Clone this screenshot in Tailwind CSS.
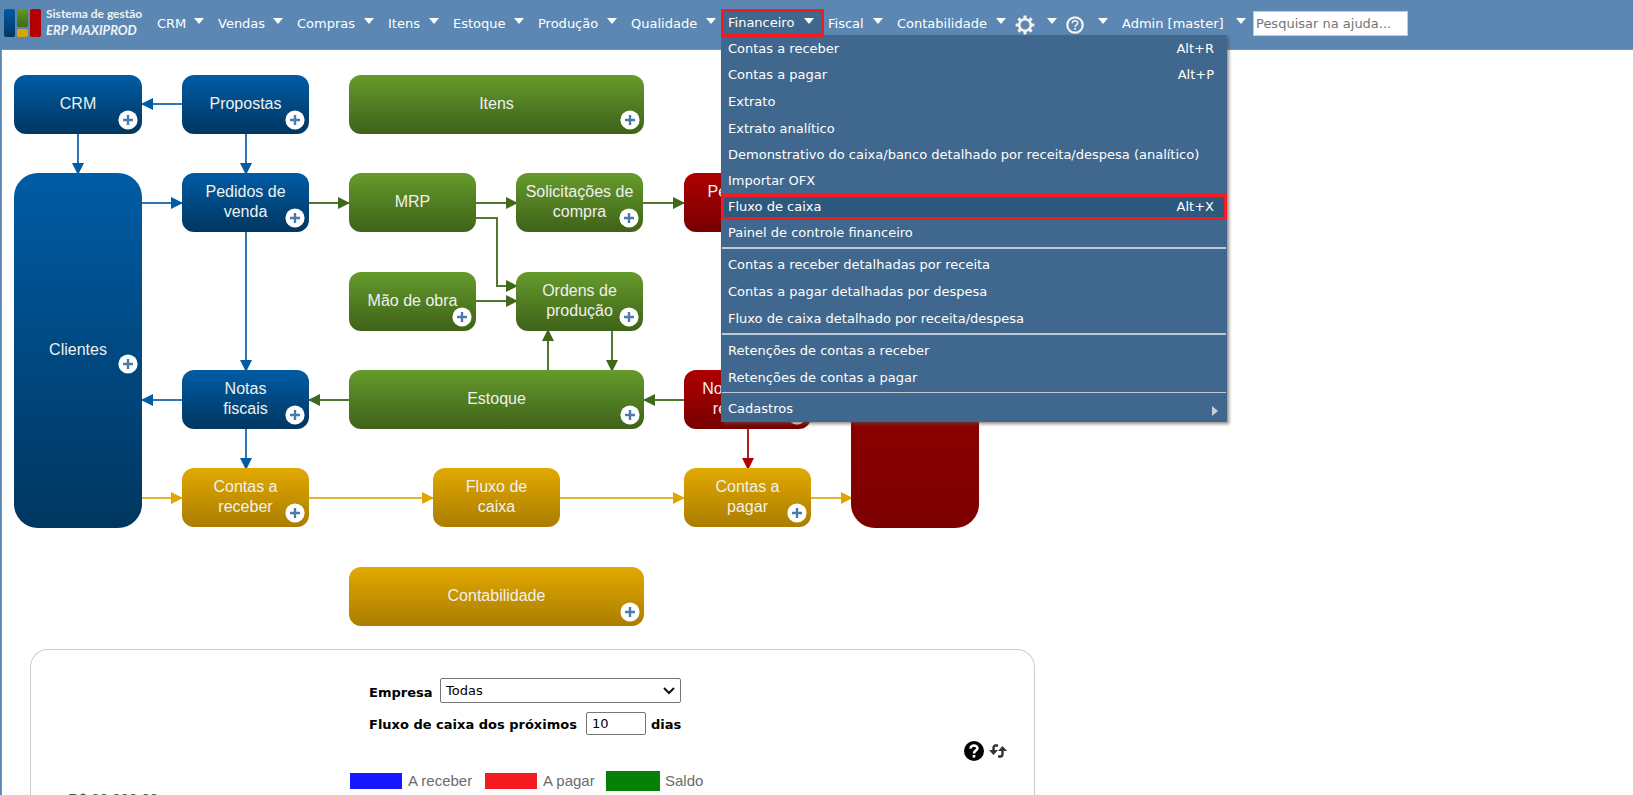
<!DOCTYPE html>
<html lang="pt-BR">
<head>
<meta charset="utf-8">
<title>ERP MAXIPROD</title>
<script src="https://cdn.jsdelivr.net/npm/@tailwindcss/browser@4"></script>
</head>
<body class="flex h-screen flex-col overflow-hidden bg-[#5c87b2] font-['Verdana','DejaVu_Sans',sans-serif] text-[13px] text-white">
<svg class="hidden" aria-hidden="true">
  <symbol id="tri" viewBox="0 0 10 6"><path d="M0 0h10L5 6z" fill="#fff"/></symbol>
  <symbol id="plus" viewBox="0 0 20 20"><circle cx="10" cy="10" r="9.6" fill="#fff"/><path d="M10 5v10M5 10h10" stroke="#4a7bab" stroke-width="2.4"/></symbol>
</svg>

<header class="flex h-[49px] shrink-0 items-start pl-1">
  <a href="#" class="mt-2 flex w-[153px] shrink-0 items-start gap-[5px] font-['Lato',sans-serif] text-[#eef3f8]">
    <svg class="mt-px h-7 w-[37px]" viewBox="0 0 37 28">
      <defs>
        <linearGradient id="lb" x2="0" y2="1"><stop stop-color="#005ca5"/><stop offset="1" stop-color="#003761"/></linearGradient>
        <linearGradient id="lg" x2="0" y2="1"><stop stop-color="#5f9a22"/><stop offset="1" stop-color="#3f6a14"/></linearGradient>
      </defs>
      <rect width="11" height="28" rx="2" fill="url(#lb)"/>
      <rect x="13" width="11" height="18" rx="2" fill="url(#lg)"/>
      <rect x="13" y="20" width="11" height="8" rx="2" fill="#dba400"/>
      <rect x="26" width="11" height="28" rx="2" fill="#b40000"/>
    </svg>
    <span class="block whitespace-nowrap text-xs leading-3 font-bold">Sistema de gestão<br><span class="block pt-0.5 text-[13px] leading-4 italic">ERP MAXIPROD</span></span>
  </a>
  <nav class="flex items-start whitespace-nowrap leading-[26px]">
    <a href="#" class="mt-[11px] flex w-[61px] items-start justify-between pr-3.5">CRM<svg class="mt-[7px] h-1.5 w-2.5"><use href="#tri"/></svg></a>
    <a href="#" class="mt-[11px] flex w-[79px] items-start justify-between pr-3.5">Vendas<svg class="mt-[7px] h-1.5 w-2.5"><use href="#tri"/></svg></a>
    <a href="#" class="mt-[11px] flex w-[91px] items-start justify-between pr-3.5">Compras<svg class="mt-[7px] h-1.5 w-2.5"><use href="#tri"/></svg></a>
    <a href="#" class="mt-[11px] flex w-[65px] items-start justify-between pr-3.5">Itens<svg class="mt-[7px] h-1.5 w-2.5"><use href="#tri"/></svg></a>
    <a href="#" class="mt-[11px] flex w-[85px] items-start justify-between pr-3.5">Estoque<svg class="mt-[7px] h-1.5 w-2.5"><use href="#tri"/></svg></a>
    <a href="#" class="mt-[11px] flex w-[93px] items-start justify-between pr-3.5">Produção<svg class="mt-[7px] h-1.5 w-2.5"><use href="#tri"/></svg></a>
    <a href="#" class="mt-[11px] flex w-[90px] items-start justify-between pr-[5px]">Qualidade<svg class="mt-[7px] h-1.5 w-2.5"><use href="#tri"/></svg></a>
    <div class="relative mt-[9px]">
      <button type="button" aria-expanded="true" class="relative z-20 flex h-7 w-[103px] items-start justify-between border-3 border-[#f31b20] bg-[#40688e] pr-[7px] pl-1 leading-[22px]">Financeiro<svg class="mt-1.5 h-1.5 w-2.5"><use href="#tri"/></svg></button>
      <div class="absolute top-[26px] left-0 z-10 w-[506px] bg-[#40688e] leading-[26px] shadow-[2px_2px_3px_rgba(90,80,70,.65)]">
        <div class="px-[7px] pt-px pb-px">
          <a href="#" class="flex justify-between pr-1.5">Contas a receber<span>Alt+R</span></a>
          <a href="#" class="flex justify-between pr-1.5">Contas a pagar<span>Alt+P</span></a>
          <a href="#" class="block leading-7">Extrato</a>
          <a href="#" class="block">Extrato analítico</a>
          <a href="#" class="block">Demonstrativo do caixa/banco detalhado por receita/despesa (analítico)</a>
          <a href="#" class="block">Importar OFX</a>
          <a href="#" class="-mx-[7px] flex justify-between border-3 border-[#f31b20] bg-[#2d597f] pr-2.5 pl-1 leading-5">Fluxo de caixa<span>Alt+X</span></a>
          <a href="#" class="block">Painel de controle financeiro</a>
        </div>
        <div class="mx-px border-t-2 border-[#bfc9d4] px-1.5 pt-[3px] pb-px">
          <a href="#" class="block">Contas a receber detalhadas por receita</a>
          <a href="#" class="block leading-7">Contas a pagar detalhadas por despesa</a>
          <a href="#" class="block">Fluxo de caixa detalhado por receita/despesa</a>
        </div>
        <div class="mx-px border-t-2 border-[#bfc9d4] px-1.5 pt-[3px]">
          <a href="#" class="block">Retenções de contas a receber</a>
          <a href="#" class="block leading-7">Retenções de contas a pagar</a>
        </div>
        <div class="mx-px border-t border-[#bfc9d4] px-1.5 pt-[3px]">
          <a href="#" class="flex items-center justify-between pr-0.5">Cadastros<svg class="mt-1 h-2.5 w-1.5" viewBox="0 0 6 10"><path d="M0 0l6 5-6 5z" fill="#c8d0d8"/></svg></a>
        </div>
      </div>
    </div>
    <a href="#" class="mt-[11px] ml-1 flex w-[69px] items-start justify-between pr-3.5">Fiscal<svg class="mt-[7px] h-1.5 w-2.5"><use href="#tri"/></svg></a>
    <a href="#" class="mt-[11px] flex w-[118px] items-start justify-between pr-[9px]">Contabilidade<svg class="mt-[7px] h-1.5 w-2.5"><use href="#tri"/></svg></a>
    <a href="#" aria-label="Configurações" class="mt-[11px] flex w-[51px] items-start justify-between pr-[9px]">
      <svg class="mt-1 h-5 w-5" viewBox="0 0 20 20"><g stroke="#f6f3ee" fill="none"><circle cx="10" cy="10" r="5.8" stroke-width="2.6"/><path stroke-width="3" d="M10 .6v3.4M10 16v3.4M.6 10H4M16 10h3.4M3.400 3.400l2.300 2.300M14.300 14.300l2.300 2.300M3.400 16.600l2.300-2.300M14.300 5.700l2.300-2.300"/></g></svg>
      <svg class="mt-[7px] h-1.5 w-2.5"><use href="#tri"/></svg></a>
    <a href="#" aria-label="Ajuda" class="mt-[11px] flex w-[56px] items-start justify-between pr-3.5">
      <svg class="mt-[5px] h-[18px] w-[18px]" viewBox="0 0 18 18" fill="none" stroke="#f6f3ee"><circle cx="9" cy="9" r="7.7" stroke-width="2.2"/><path d="M6.300 7.200C6.300 3.900 11.700 4 11.700 7c0 1.800-2.600 1.900-2.600 4" stroke-width="1.500"/><path d="M8.200 12.800H10" stroke-width="1.700"/></svg>
      <svg class="mt-[7px] h-1.5 w-2.5"><use href="#tri"/></svg></a>
    <a href="#" class="mt-[11px] flex w-[131px] items-start justify-between pr-[7px]">Admin [master]<svg class="mt-[7px] h-1.5 w-2.5"><use href="#tri"/></svg></a>
  </nav>
  <input type="search" aria-label="Pesquisar na ajuda" placeholder="Pesquisar na ajuda..." class="mt-[11px] h-[25px] w-[155px] border border-[#c9c9c9] bg-white px-0.5 text-black placeholder:text-[#757575]">
</header>

<main class="ml-px grow border-t border-l border-[#8a8f96] bg-white">
  <section aria-label="Fluxo do sistema" class="relative h-[598px] font-['Liberation_Sans',Arial,sans-serif] text-base leading-5 text-[#f0f0f0]">
    <svg class="absolute top-0 left-0 h-full w-[1000px]" viewBox="2 50 1000 598" fill="none" stroke-width="2">
      <defs>
        <marker id="mb" markerUnits="userSpaceOnUse" markerWidth="12" markerHeight="12" refX="11" refY="6" orient="auto"><path d="M0 0l12 6-12 6z" fill="#005ca5"/></marker>
        <marker id="mg" markerUnits="userSpaceOnUse" markerWidth="12" markerHeight="12" refX="11" refY="6" orient="auto"><path d="M0 0l12 6-12 6z" fill="#40681a"/></marker>
        <marker id="my" markerUnits="userSpaceOnUse" markerWidth="12" markerHeight="12" refX="11" refY="6" orient="auto"><path d="M0 0l12 6-12 6z" fill="#e0a500"/></marker>
        <marker id="mr" markerUnits="userSpaceOnUse" markerWidth="12" markerHeight="12" refX="11" refY="6" orient="auto"><path d="M0 0l12 6-12 6z" fill="#b00000"/></marker>
      </defs>
      <g stroke="#2f74b3">
        <path marker-end="url(#mb)" d="M182 104H142"/><path marker-end="url(#mb)" d="M78 134V174"/><path marker-end="url(#mb)" d="M246 134V174"/>
        <path marker-end="url(#mb)" d="M142 203H182"/><path marker-end="url(#mb)" d="M246 232V371"/><path marker-end="url(#mb)" d="M182 400H142"/><path marker-end="url(#mb)" d="M246 429V469"/>
      </g>
      <g stroke="#52782f">
        <path marker-end="url(#mg)" d="M309 203H349"/><path marker-end="url(#mg)" d="M476 203H517"/><path marker-end="url(#mg)" d="M476 218H497V286H517"/><path marker-end="url(#mg)" d="M476 301H517"/>
        <path marker-end="url(#mg)" d="M643 203H684"/><path marker-end="url(#mg)" d="M548 370V330"/><path marker-end="url(#mg)" d="M612 330V371"/><path marker-end="url(#mg)" d="M349 400H309"/><path marker-end="url(#mg)" d="M684 400H644"/>
      </g>
      <g stroke="#e6b335">
        <path marker-end="url(#my)" d="M142 498H182"/><path marker-end="url(#my)" d="M309 498H433"/><path marker-end="url(#my)" d="M560 498H684"/><path marker-end="url(#my)" d="M810 498H852"/>
      </g>
      <path marker-end="url(#mr)" d="M748 429V469" stroke="#b02020"/>
    </svg>
    <a href="#" class="absolute top-[25px] left-3 flex h-[59px] w-32 items-center justify-center rounded-xl bg-linear-to-b from-[#005ca5] to-[#003761] pb-0.5 text-center">CRM<svg class="absolute right-1 bottom-1 h-5 w-5"><use href="#plus"/></svg></a>
    <a href="#" class="absolute top-[25px] left-[180px] flex h-[59px] w-[127px] items-center justify-center rounded-xl bg-linear-to-b from-[#005ca5] to-[#003761] pb-0.5 text-center">Propostas<svg class="absolute right-1 bottom-1 h-5 w-5"><use href="#plus"/></svg></a>
    <a href="#" class="absolute top-[25px] left-[347px] flex h-[59px] w-[295px] items-center justify-center rounded-xl bg-linear-to-b from-[#659b2b] to-[#3f6219] pb-0.5 text-center">Itens<svg class="absolute right-1 bottom-1 h-5 w-5"><use href="#plus"/></svg></a>

    <a href="#" class="absolute top-[123px] left-3 flex h-[355px] w-32 items-center justify-center rounded-3xl bg-linear-to-b from-[#005ca5] to-[#003761] pb-0.5 text-center">Clientes<svg class="absolute right-1 bottom-[154px] h-5 w-5"><use href="#plus"/></svg></a>
    <a href="#" class="absolute top-[123px] left-[180px] flex h-[59px] w-[127px] items-center justify-center rounded-xl bg-linear-to-b from-[#005ca5] to-[#003761] pb-0.5 text-center">Pedidos de<br>venda<svg class="absolute right-1 bottom-1 h-5 w-5"><use href="#plus"/></svg></a>
    <a href="#" class="absolute top-[123px] left-[347px] flex h-[59px] w-[127px] items-center justify-center rounded-xl bg-linear-to-b from-[#659b2b] to-[#3f6219] pb-0.5 text-center">MRP</a>
    <a href="#" class="absolute top-[123px] left-[514px] flex h-[59px] w-[127px] items-center justify-center rounded-xl bg-linear-to-b from-[#659b2b] to-[#3f6219] pb-0.5 text-center">Solicitações de<br>compra<svg class="absolute right-1 bottom-1 h-5 w-5"><use href="#plus"/></svg></a>
    <a href="#" class="absolute top-[123px] left-[682px] flex h-[59px] w-[127px] items-center justify-center rounded-xl bg-linear-to-b from-[#b00000] to-[#780000] pb-0.5 text-center">Pedidos de<br>compra</a>

    <a href="#" class="absolute top-[222px] left-[347px] flex h-[59px] w-[127px] items-center justify-center rounded-xl bg-linear-to-b from-[#659b2b] to-[#3f6219] pb-0.5 text-center">Mão de obra<svg class="absolute right-1 bottom-1 h-5 w-5"><use href="#plus"/></svg></a>
    <a href="#" class="absolute top-[222px] left-[514px] flex h-[59px] w-[127px] items-center justify-center rounded-xl bg-linear-to-b from-[#659b2b] to-[#3f6219] pb-0.5 text-center">Ordens de<br>produção<svg class="absolute right-1 bottom-1 h-5 w-5"><use href="#plus"/></svg></a>

    <a href="#" class="absolute top-80 left-[180px] flex h-[59px] w-[127px] items-center justify-center rounded-xl bg-linear-to-b from-[#005ca5] to-[#003761] pb-0.5 text-center">Notas<br>fiscais<svg class="absolute right-1 bottom-1 h-5 w-5"><use href="#plus"/></svg></a>
    <a href="#" class="absolute top-80 left-[347px] flex h-[59px] w-[295px] items-center justify-center rounded-xl bg-linear-to-b from-[#659b2b] to-[#3f6219] pb-0.5 text-center">Estoque<svg class="absolute right-1 bottom-1 h-5 w-5"><use href="#plus"/></svg></a>
    <a href="#" class="absolute top-80 left-[682px] flex h-[59px] w-[127px] items-center justify-center rounded-xl bg-linear-to-b from-[#b00000] to-[#780000] pb-0.5 text-center">Notas fiscais<br>recebidas<svg class="absolute right-1 bottom-1 h-5 w-5"><use href="#plus"/></svg></a>
    <a href="#" aria-label="Fornecedores" class="absolute top-[123px] left-[849px] h-[355px] w-32 rounded-3xl bg-linear-to-b from-[#b00000] to-[#7c0000]"></a>

    <a href="#" class="absolute top-[418px] left-[180px] flex h-[59px] w-[127px] items-center justify-center rounded-xl bg-linear-to-b from-[#e2a900] to-[#ab7d00] pb-0.5 text-center">Contas a<br>receber<svg class="absolute right-1 bottom-1 h-5 w-5"><use href="#plus"/></svg></a>
    <a href="#" class="absolute top-[418px] left-[431px] flex h-[59px] w-[127px] items-center justify-center rounded-xl bg-linear-to-b from-[#e2a900] to-[#ab7d00] pb-0.5 text-center">Fluxo de<br>caixa</a>
    <a href="#" class="absolute top-[418px] left-[682px] flex h-[59px] w-[127px] items-center justify-center rounded-xl bg-linear-to-b from-[#e2a900] to-[#ab7d00] pb-0.5 text-center">Contas a<br>pagar<svg class="absolute right-1 bottom-1 h-5 w-5"><use href="#plus"/></svg></a>
    <a href="#" class="absolute top-[517px] left-[347px] flex h-[59px] w-[295px] items-center justify-center rounded-xl bg-linear-to-b from-[#e2a900] to-[#ab7d00] pb-0.5 text-center">Contabilidade<svg class="absolute right-1 bottom-1 h-5 w-5"><use href="#plus"/></svg></a>
  </section>

  <section class="mt-px ml-7 w-[1005px] rounded-t-[18px] border border-b-0 border-[#ccc] pt-7 text-black">
    <form class="ml-[338px] flex flex-col gap-[9px]">
      <div class="flex items-center">
        <label for="empresa" class="w-[71px] pt-1 font-bold">Empresa</label>
        <div class="relative">
          <select id="empresa" class="h-[25px] w-[241px] appearance-none rounded-xs border border-[#767676] bg-white px-[5px] leading-5"><option>Todas</option></select>
          <svg class="pointer-events-none absolute top-[9px] right-1.5 h-2 w-3" viewBox="0 0 12 8" fill="none" stroke="#111" stroke-width="2"><path d="M1 1l5 5 5-5"/></svg>
        </div>
      </div>
      <div class="flex items-center font-bold">
        <label for="dias" class="w-[217px] pt-0.5">Fluxo de caixa dos próximos</label>
        <input id="dias" type="text" value="10" class="h-[23px] w-[60px] rounded-xs border border-[#767676] px-[5px] font-normal">
        <span class="ml-[5px] pt-0.5">dias</span>
      </div>
    </form>
    <div class="mt-1.5 mr-[27px] flex items-center justify-end gap-[5px]">
      <button type="button" aria-label="Ajuda"><svg class="block h-5 w-5" viewBox="0 0 20 20"><circle cx="10" cy="10" r="10"/><path d="M6.600 7.600C6.400 3.400 13.600 3.600 13.400 7.400 13.200 9.600 10 9.600 10 12.400" fill="none" stroke="#fff" stroke-width="2.600"/><path d="M8.700 14h2.600v2.600H8.700z" fill="#fff"/></svg></button>
      <button type="button" aria-label="Atualizar"><svg class="block h-[14px] w-[18px]" viewBox="0 0 18 14"><path d="M9 1.500H6.500Q4.500 1.500 4.500 4v3M9 12.500h2.500Q13.500 12.500 13.500 10V5" fill="none" stroke="#333" stroke-width="2.400"/><path d="M0 6h9L4.500 11zM9 7h9l-4.500-5z" fill="#333"/></svg></button>
    </div>
    <div class="mt-2.5 ml-[319px] flex items-center font-['Liberation_Sans',Arial,sans-serif] text-[15px] leading-5 text-[#6b6b6b]">
      <span class="mr-1.5 h-4 w-[52px] bg-[#1717ff]"></span><span class="w-[77px]">A receber</span>
      <span class="mr-1.5 h-4 w-[52px] bg-[#f31b20]"></span><span class="w-[63px]">A pagar</span>
      <span class="mr-[5px] h-5 w-[54px] bg-[#068006]"></span><span>Saldo</span>
    </div>
    <p class="ml-[37px] font-['Liberation_Sans',Arial,sans-serif] text-[15px] leading-4 text-[#545454]">R$ 20.000,00</p>
  </section>
</main>
</body>
</html>
